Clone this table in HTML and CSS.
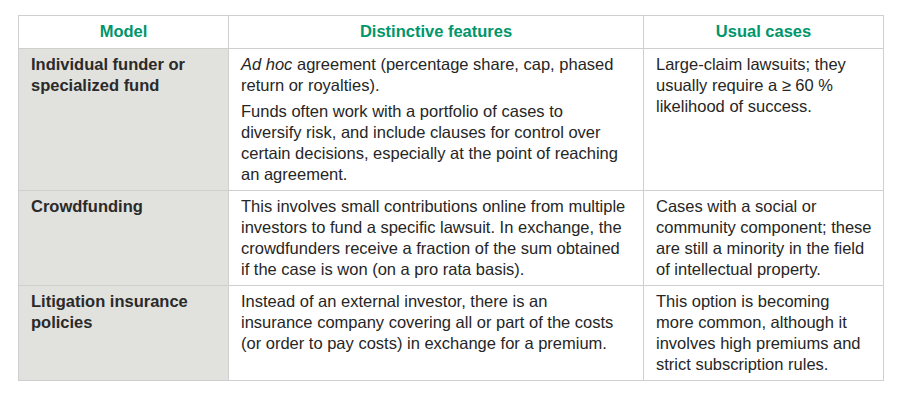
FILE: index.html
```html
<!DOCTYPE html>
<html>
<head>
<meta charset="utf-8">
<link rel="stylesheet" href="styles.css">
</head>
<body>
<table class="models">
  <colgroup>
    <col class="c1"><col class="c2"><col class="c3">
  </colgroup>
  <thead>
    <tr><th>Model</th><th>Distinctive features</th><th>Usual cases</th></tr>
  </thead>
  <tbody>
    <tr>
      <td class="name">Individual funder or<br>specialized fund</td>
      <td>
        <p><em>Ad hoc</em> agreement (percentage share, cap, phased<br>return or royalties).</p>
        <p>Funds often work with a portfolio of cases to<br>diversify risk, and include clauses for control over<br>certain decisions, especially at the point of reaching<br>an agreement.</p>
      </td>
      <td><p>Large-claim lawsuits; they<br>usually require a ≥ 60 %<br>likelihood of success.</p></td>
    </tr>
    <tr>
      <td class="name">Crowdfunding</td>
      <td><p>This involves small contributions online from multiple<br>investors to fund a specific lawsuit. In exchange, the<br>crowdfunders receive a fraction of the sum obtained<br>if the case is won (on a pro rata basis).</p></td>
      <td><p>Cases with a social or<br>community component; these<br>are still a minority in the field<br>of intellectual property.</p></td>
    </tr>
    <tr>
      <td class="name">Litigation insurance<br>policies</td>
      <td><p>Instead of an external investor, there is an<br>insurance company covering all or part of the costs<br>(or order to pay costs) in exchange for a premium.</p></td>
      <td><p>This option is becoming<br>more common, although it<br>involves high premiums and<br>strict subscription rules.</p></td>
    </tr>
  </tbody>
</table>
</body>
</html>
```
FILE: styles.css
```css
html, body { margin: 0; padding: 0; background: #fff; }
body {
  padding: 15px 0 0 18px;
  font-family: "Liberation Sans", Arial, sans-serif;
  font-size: 16.5px;
  line-height: 21px;
  color: #262626;
}
.models {
  border-collapse: collapse;
  width: 865px;
  table-layout: fixed;
}
.c1 { width: 210px; }
.c2 { width: 415px; }
.c3 { width: 240px; }
.models th, .models td {
  border: 1px solid #cfcfcf;
  vertical-align: top;
  text-align: left;
  padding: 5px 4px 5px 12px;
  white-space: nowrap;
}
.models th {
  color: #00966a;
  font-weight: bold;
  text-align: center;
  padding: 5px 12px 6px;
}
.models td.name {
  background: #e1e1dd;
  font-weight: bold;
  color: #2a2a2a;
}
.models p { margin: 0; }
.models p + p { margin-top: 5px; }
```
